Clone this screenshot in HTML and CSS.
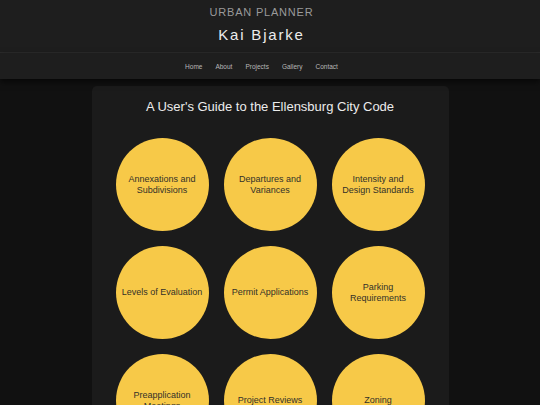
FILE: index.html
```html
<!DOCTYPE html>
<html>
<head>
<meta charset="utf-8">
<link rel="stylesheet" href="styles.css">
</head>
<body>
<header class="site-header">
  <div class="role">URBAN PLANNER</div>
  <div class="name">Kai Bjarke</div>
</header>
<nav class="site-nav">
  <a href="#">Home</a>
  <a href="#">About</a>
  <a href="#">Projects</a>
  <a href="#">Gallery</a>
  <a href="#">Contact</a>
</nav>
<main class="card">
  <h1 class="title">A User's Guide to the Ellensburg City Code</h1>
  <div class="grid">
    <div class="circle"><span>Annexations and<br>Subdivisions</span></div>
    <div class="circle"><span>Departures and<br>Variances</span></div>
    <div class="circle"><span>Intensity and<br>Design Standards</span></div>
    <div class="circle"><span>Levels of Evaluation</span></div>
    <div class="circle"><span>Permit Applications</span></div>
    <div class="circle"><span>Parking<br>Requirements</span></div>
    <div class="circle"><span>Preapplication<br>Meetings</span></div>
    <div class="circle"><span>Project Reviews</span></div>
    <div class="circle"><span>Zoning</span></div>
  </div>
</main>
</body>
</html>
```
FILE: styles.css
```css
html, body {
  margin: 0;
  padding: 0;
  background: #111111;
  font-family: "Liberation Sans", Arial, sans-serif;
  overflow: hidden;
}
.site-header {
  background: #1e1e1e;
  text-align: center;
  height: 52px;
  padding-right: 17px;
  border-bottom: 1px solid #2b2b2b;
  box-sizing: content-box;
}
.role {
  padding-top: 6px;
  font-size: 11px;
  line-height: 13px;
  letter-spacing: 0.8px;
  color: #9a9a9a;
}
.name {
  margin-top: 7px;
  font-size: 15px;
  line-height: 17px;
  letter-spacing: 1.8px;
  color: #ececec;
}
.site-nav {
  background: #1e1e1e;
  height: 26px;
  padding-right: 17px;
  display: flex;
  justify-content: center;
  align-items: center;
  gap: 13px;
  box-shadow: 0 3px 6px rgba(0,0,0,0.6);
  position: relative;
}
.site-nav a {
  color: #b8b8b8;
  text-decoration: none;
  font-size: 6.5px;
}
.card {
  width: 357px;
  margin: 7px auto 0;
  background: #1b1b1b;
  border-radius: 5px;
  padding: 13px 0 30px;
  box-sizing: border-box;
}
.title {
  margin: 0;
  text-align: center;
  font-weight: normal;
  font-size: 13px;
  line-height: 16px;
  letter-spacing: 0;
  color: #ececec;
}
.grid {
  margin-top: 23px;
  display: grid;
  grid-template-columns: repeat(3, 93px);
  column-gap: 15px;
  row-gap: 15px;
  justify-content: center;
}
.circle {
  width: 93px;
  height: 93px;
  border-radius: 50%;
  background: #f7c948;
  display: flex;
  align-items: center;
  justify-content: center;
  text-align: center;
  font-size: 9px;
  line-height: 11px;
  color: #333129;
}
```
